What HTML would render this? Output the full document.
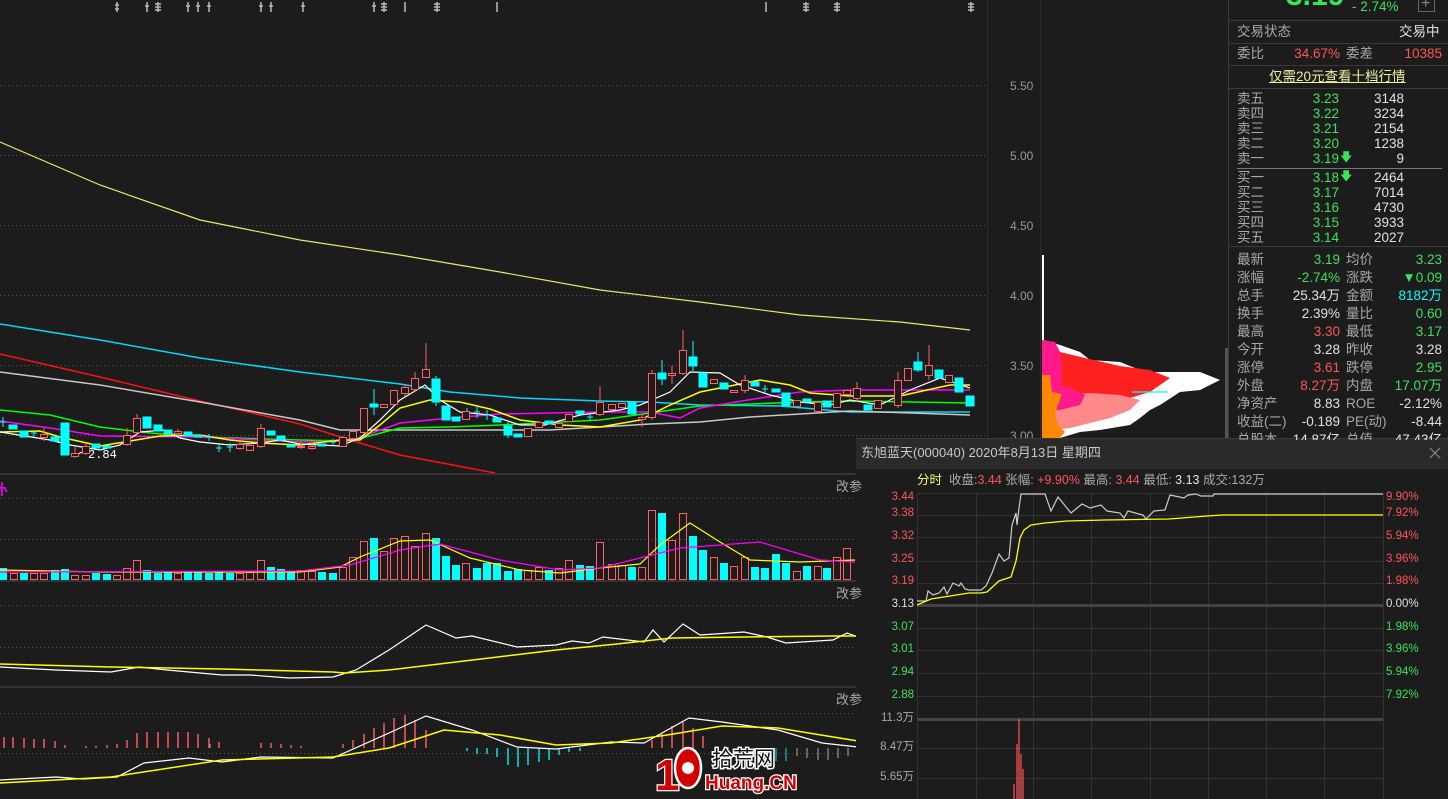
<!DOCTYPE html>
<html><head><meta charset="utf-8">
<style>
*{margin:0;padding:0;box-sizing:border-box}
body{width:1448px;height:799px;overflow:hidden;background:#1c1c1c;position:relative;font-family:"Liberation Sans","Noto Sans CJK SC",sans-serif}
.t{position:absolute;white-space:nowrap;line-height:1}
.g{color:#a8a8a8}.gr{color:#39e35a}.rd{color:#ff5555}.w{color:#e0e0e0}.cy{color:#00ffff}
#rp .t{font-size:13.5px}
.r{text-align:right}
</style></head><body>
<svg width="1448" height="799" style="position:absolute;left:0;top:0">
<g stroke="#555" stroke-width="1" stroke-dasharray="1 3">
<line x1="0" y1="85.5" x2="987" y2="85.5"/><line x1="0" y1="155.5" x2="987" y2="155.5"/><line x1="0" y1="225.5" x2="987" y2="225.5"/><line x1="0" y1="295.5" x2="987" y2="295.5"/><line x1="0" y1="365.5" x2="987" y2="365.5"/><line x1="0" y1="435.5" x2="987" y2="435.5"/>
<line x1="0" y1="498.5" x2="856" y2="498.5"/><line x1="0" y1="539.5" x2="856" y2="539.5"/>
<line x1="0" y1="605.5" x2="856" y2="605.5"/><line x1="0" y1="647.5" x2="856" y2="647.5"/>
<line x1="0" y1="713.5" x2="856" y2="713.5"/><line x1="0" y1="753.5" x2="856" y2="753.5"/>
</g>
<g stroke="#333" stroke-width="2"><line x1="0" y1="474" x2="987" y2="474"/><line x1="0" y1="581" x2="856" y2="581"/><line x1="0" y1="687" x2="856" y2="687"/></g>
<line x1="987.5" y1="0" x2="987.5" y2="799" stroke="#2c2c2c"/>
<line x1="1040.5" y1="0" x2="1040.5" y2="440" stroke="#2c2c2c"/>
<line x1="1228.5" y1="0" x2="1228.5" y2="799" stroke="#3a3a3a"/>
<rect x="1225" y="348" width="3" height="92" fill="#555"/>
<g stroke="#bbb" stroke-width="1.5">
<path d="M117 2v10M147 2v10M158 2v10M188 2v10M198 2v10M209 2v10M261 2v10M271 2v10M303 2v10M374 2v10M384 2v10M405 2v10M437 2v10M497 2v10M766 2v10M806 2v10M837 2v10M971 2v10"/>
<path d="M115 5h4M115 9h4M145 6h4M155 4h6M155 7h6M155 10h6M186 6h4M196 6h4M207 6h4M259 6h4M269 6h4M301 6h4M372 6h4M381 4h6M381 7h6M381 10h6M434 4h6M434 7h6M434 10h6M803 4h6M803 7h6M803 10h6M834 4h6M834 7h6M834 10h6M968 4h6M968 7h6M968 10h6"/>
</g>
<g fill="none" stroke-width="1.2">
<polyline stroke="#e8e86a" points="0,142 100,185 200,220 300,240 400,255 500,272 600,290 700,302 800,315 900,322 970,330"/>
<polyline stroke="#00d8ff" stroke-width="1.5" points="0,324 100,340 200,358 300,372 350,378 400,384 450,392 520,398 600,401 650,402 700,405 780,406 850,412 970,412"/>
<polyline stroke="#ff1010" stroke-width="1.5" points="0,354 100,377 200,401 300,424 350,440 400,455 495,473"/>
<polyline stroke="#c8c8c8" stroke-width="1.5" points="0,372 100,385 200,402 300,420 340,430 450,430 550,430 650,424 700,422 750,417 800,414 850,411 970,415"/>
<polyline stroke="#00ff00" stroke-width="1.5" points="0,410 50,415 100,427 150,433 200,437 300,440 350,441 400,428 450,427 500,425 600,420 650,413 700,406 800,402 850,401 970,403"/>
<polyline stroke="#ff00ff" stroke-width="1.5" points="0,421 50,428 100,436 200,437 300,442 350,441 400,423 450,418 500,414 600,412 650,412 680,418 700,408 760,398 800,392 850,390 970,390"/>
<polyline stroke="#ffff00" stroke-width="1.5" points="0,432 40,431 60,437 100,446 130,441 160,436 200,435 230,440 260,443 300,445 340,440 360,440 380,425 400,408 430,400 460,402 490,409 520,420 560,425 600,427 640,420 670,405 700,392 760,380 790,385 810,393 850,396 900,396 950,385 970,385"/>
<polyline stroke="#fff" points="0,432 50,440 70,445 100,450 120,445 140,432 165,430 180,438 200,442 230,445 260,443 280,440 300,444 340,446 360,438 380,420 400,400 425,385 440,400 460,412 490,415 520,425 545,425 580,415 620,410 640,405 670,392 690,372 720,373 740,385 770,395 800,402 830,405 850,400 880,405 910,390 940,378 970,388"/>
</g>
<text x="88" y="458" fill="#fff" font-size="12" font-family="Liberation Mono">2.84</text>
<path d="M76 455l8-4" stroke="#fff"/>
<g stroke-width="1">
<g stroke="#00ffff" fill="#00ffff">
<path d="M3 417v10M0 422h6M34 431v6M31 433h6M209 434v7M206 437h6M219 444v8M216 448h6M230 443v9M227 447h6M333 439v7M330 442h6M467 408v10M464 413h6M477 406v12M474 412h6M487 410v10M484 415h6M765 385v8M762 389h6M590 413v8M587 417h6"/>
<rect x="9" y="425" width="8" height="4"/><rect x="20" y="431" width="8" height="6"/><rect x="51" y="437" width="8" height="4"/><rect x="61" y="423" width="8" height="32"/><rect x="92" y="444" width="8" height="4"/><rect x="103" y="446" width="8" height="2"/><rect x="143" y="417" width="8" height="11"/><rect x="154" y="425" width="8" height="6"/><rect x="164" y="430" width="8" height="4"/><rect x="184" y="432" width="8" height="4"/><rect x="194" y="435" width="8" height="2"/><rect x="267" y="431" width="8" height="4"/><rect x="277" y="436" width="8" height="4"/><rect x="287" y="445" width="8" height="2"/><rect x="318" y="444" width="8" height="2"/>
<rect x="370" y="404" width="8" height="3"/><rect x="432" y="379" width="8" height="23"/><rect x="442" y="406" width="8" height="14"/><rect x="452" y="417" width="8" height="4"/><rect x="493" y="418" width="8" height="4"/><rect x="504" y="426" width="8" height="9"/><rect x="514" y="434" width="8" height="3"/><rect x="545" y="421" width="8" height="3"/><rect x="576" y="411" width="8" height="3"/><rect x="628" y="402" width="8" height="12"/><rect x="658" y="373" width="8" height="6"/><rect x="689" y="357" width="8" height="9"/><rect x="699" y="373" width="8" height="14"/><rect x="720" y="383" width="8" height="6"/><rect x="751" y="382" width="8" height="4"/><rect x="772" y="389" width="8" height="3"/><rect x="782" y="393" width="8" height="13"/><rect x="803" y="399" width="8" height="3"/><rect x="823" y="401" width="8" height="6"/><rect x="864" y="405" width="8" height="5"/><rect x="914" y="362" width="8" height="8"/><rect x="935" y="370" width="8" height="8"/><rect x="955" y="378" width="8" height="14"/><rect x="966" y="396" width="8" height="10"/>
<path d="M374 389v26M436 376v30M508 422v16M693 341v30M662 360v25M918 352v20"/>
</g>
<g stroke="#ff5f5f" fill="none">
<path d="M44 428v13M75 447v11M86 443v12M127 428v18M137 414v20M178 429v7M240 441v9M250 443v8M261 424v24M301 441v8M312 443v7M343 436v11M426 343v34M405 384v12M415 372v20M600 386v30M683 330v45M672 366v18M652 370v50M642 414v13M929 345v35M898 372v36M745 375v18M857 382v20"/>
<rect x="40.5" y="434.5" width="7" height="3" fill="#1c1c1c"/><rect x="71.5" y="453.5" width="7" height="3" fill="#1c1c1c"/><rect x="82.5" y="446.5" width="7" height="7" fill="#1c1c1c"/><rect x="123.5" y="435.5" width="7" height="9" fill="#1c1c1c"/><rect x="133.5" y="418.5" width="7" height="14" fill="#1c1c1c"/><rect x="174.5" y="431.5" width="7" height="2" fill="#1c1c1c"/><rect x="236.5" y="444.5" width="7" height="4" fill="#1c1c1c"/><rect x="246.5" y="445.5" width="7" height="5" fill="#1c1c1c"/><rect x="257.5" y="428.5" width="7" height="18" fill="#1c1c1c"/><rect x="297.5" y="446.5" width="7" height="1" fill="#1c1c1c"/><rect x="308.5" y="446.5" width="7" height="2" fill="#1c1c1c"/><rect x="339.5" y="437.5" width="7" height="9" fill="#1c1c1c"/>
<rect x="349.5" y="431.5" width="7" height="7" fill="#1c1c1c"/><rect x="360.5" y="408.5" width="7" height="24" fill="#1c1c1c"/><rect x="380.5" y="404.5" width="7" height="3" fill="#1c1c1c"/><rect x="390.5" y="390.5" width="7" height="14" fill="#1c1c1c"/><rect x="401.5" y="387.5" width="7" height="6" fill="#1c1c1c"/><rect x="411.5" y="378.5" width="7" height="11" fill="#1c1c1c"/><rect x="422.5" y="369.5" width="7" height="8" fill="#1c1c1c"/><rect x="462.5" y="411.5" width="7" height="8" fill="#1c1c1c"/><rect x="524.5" y="428.5" width="7" height="8" fill="#1c1c1c"/><rect x="535.5" y="422.5" width="7" height="5" fill="#1c1c1c"/><rect x="555.5" y="423.5" width="7" height="4" fill="#1c1c1c"/><rect x="565.5" y="414.5" width="7" height="7" fill="#1c1c1c"/><rect x="596.5" y="402.5" width="7" height="12" fill="#1c1c1c"/><rect x="608.5" y="404.5" width="7" height="5" fill="#1c1c1c"/><rect x="618.5" y="403.5" width="7" height="4" fill="#1c1c1c"/><rect x="638.5" y="417.5" width="7" height="2" fill="#1c1c1c"/><rect x="648.5" y="373.5" width="7" height="44" fill="#1c1c1c"/><rect x="668.5" y="373.5" width="7" height="2" fill="#1c1c1c"/><rect x="679.5" y="350.5" width="7" height="23" fill="#1c1c1c"/><rect x="710.5" y="379.5" width="7" height="4" fill="#1c1c1c"/><rect x="730.5" y="390.5" width="7" height="2" fill="#1c1c1c"/><rect x="741.5" y="380.5" width="7" height="10" fill="#1c1c1c"/><rect x="793.5" y="400.5" width="7" height="6" fill="#1c1c1c"/><rect x="814.5" y="402.5" width="7" height="9" fill="#1c1c1c"/><rect x="833.5" y="393.5" width="7" height="14" fill="#1c1c1c"/><rect x="843.5" y="390.5" width="7" height="4" fill="#1c1c1c"/><rect x="853.5" y="388.5" width="7" height="10" fill="#1c1c1c"/><rect x="874.5" y="400.5" width="7" height="8" fill="#1c1c1c"/><rect x="894.5" y="380.5" width="7" height="25" fill="#1c1c1c"/><rect x="904.5" y="368.5" width="7" height="12" fill="#1c1c1c"/><rect x="925.5" y="365.5" width="7" height="10" fill="#1c1c1c"/><rect x="945.5" y="375.5" width="7" height="7" fill="#1c1c1c"/>
</g>
</g>
<g fill="#999" font-size="12" font-family="Liberation Sans">
<text x="1010" y="90">5.50</text><text x="1010" y="160">5.00</text><text x="1010" y="230">4.50</text><text x="1010" y="300">4.00</text><text x="1010" y="370">3.50</text><text x="1010" y="440">3.00</text>
</g>
<g>
<polygon fill="#fff" points="1042,255 1044,255 1044,340 1060,345 1080,352 1090,360 1120,362 1145,372 1200,372 1220,380 1200,390 1180,392 1160,405 1150,410 1140,418 1130,425 1100,430 1080,432 1060,438 1042,438"/>
<polygon fill="#ff2020" points="1060,352 1085,358 1120,366 1150,370 1170,378 1150,392 1130,398 1100,400 1080,398 1070,392 1060,385"/>
<polygon fill="#ff8888" points="1055,395 1090,393 1120,395 1140,400 1130,410 1110,418 1090,423 1070,428 1055,430"/>
<polygon fill="#ff1a8c" points="1042,340 1055,342 1060,352 1062,375 1060,385 1075,390 1085,395 1080,405 1060,410 1042,410"/>
<polygon fill="#ff8800" points="1042,375 1050,375 1052,392 1062,394 1058,405 1055,415 1058,425 1065,432 1060,438 1042,438"/>
<line x1="1132" y1="392" x2="1168" y2="392" stroke="#0ff" stroke-width="1.2"/>
</g>
<g fill="#00ffff">
<rect x="0" y="568" width="7" height="12"/><rect x="20" y="573" width="8" height="7"/><rect x="51" y="570" width="8" height="10"/><rect x="61" y="569" width="8" height="11"/><rect x="92" y="573" width="8" height="7"/><rect x="103" y="574" width="8" height="6"/><rect x="143" y="570" width="8" height="10"/><rect x="154" y="573" width="8" height="7"/><rect x="164" y="572" width="8" height="8"/><rect x="184" y="572" width="8" height="8"/><rect x="194" y="572" width="8" height="8"/><rect x="205" y="573" width="8" height="7"/><rect x="215" y="572" width="8" height="8"/><rect x="226" y="573" width="8" height="7"/><rect x="267" y="567" width="8" height="13"/><rect x="277" y="569" width="8" height="11"/><rect x="287" y="572" width="8" height="8"/><rect x="318" y="572" width="8" height="8"/><rect x="329" y="573" width="8" height="7"/>
<rect x="370" y="538" width="8" height="42"/><rect x="432" y="538" width="8" height="42"/><rect x="442" y="556" width="8" height="24"/><rect x="452" y="565" width="8" height="15"/><rect x="473" y="568" width="8" height="12"/><rect x="483" y="563" width="8" height="17"/><rect x="493" y="563" width="8" height="17"/><rect x="504" y="571" width="8" height="9"/><rect x="514" y="569" width="8" height="11"/><rect x="545" y="570" width="8" height="10"/><rect x="576" y="565" width="8" height="15"/><rect x="586" y="566" width="8" height="14"/><rect x="628" y="567" width="8" height="13"/><rect x="658" y="513" width="8" height="67"/><rect x="689" y="536" width="8" height="44"/><rect x="699" y="550" width="8" height="30"/><rect x="720" y="563" width="8" height="17"/><rect x="751" y="567" width="8" height="13"/><rect x="761" y="568" width="8" height="12"/><rect x="772" y="554" width="8" height="26"/><rect x="782" y="563" width="8" height="17"/><rect x="803" y="566" width="8" height="14"/><rect x="823" y="568" width="8" height="12"/>
</g>
<g fill="none" stroke="#ff5f5f">
<rect x="10.5" y="573.5" width="7" height="6"/><rect x="30.5" y="573.5" width="7" height="6"/><rect x="40.5" y="573.5" width="7" height="6"/><rect x="71.5" y="575.5" width="7" height="4"/><rect x="82.5" y="575.5" width="7" height="4"/><rect x="113.5" y="575.5" width="7" height="4"/><rect x="123.5" y="568.5" width="7" height="11"/><rect x="133.5" y="560.5" width="7" height="19"/><rect x="174.5" y="573.5" width="7" height="6"/><rect x="236.5" y="573.5" width="7" height="6"/><rect x="246.5" y="572.5" width="7" height="7"/><rect x="257.5" y="560.5" width="7" height="19"/><rect x="297.5" y="570.5" width="7" height="9"/><rect x="308.5" y="571.5" width="7" height="8"/><rect x="339.5" y="567.5" width="7" height="12"/>
<rect x="349.5" y="557.5" width="7" height="22"/><rect x="360.5" y="541.5" width="7" height="38"/><rect x="380.5" y="551.5" width="7" height="28"/><rect x="390.5" y="538.5" width="7" height="41"/><rect x="401.5" y="536.5" width="7" height="43"/><rect x="411.5" y="546.5" width="7" height="33"/><rect x="422.5" y="533.5" width="7" height="46"/><rect x="462.5" y="563.5" width="7" height="16"/><rect x="524.5" y="570.5" width="7" height="9"/><rect x="535.5" y="567.5" width="7" height="12"/><rect x="555.5" y="568.5" width="7" height="11"/><rect x="565.5" y="560.5" width="7" height="19"/><rect x="596.5" y="542.5" width="7" height="37"/><rect x="608.5" y="564.5" width="7" height="15"/><rect x="618.5" y="565.5" width="7" height="14"/><rect x="638.5" y="567.5" width="7" height="12"/><rect x="648.5" y="510.5" width="7" height="69"/><rect x="668.5" y="540.5" width="7" height="39"/><rect x="679.5" y="513.5" width="7" height="66"/><rect x="710.5" y="557.5" width="7" height="22"/><rect x="730.5" y="566.5" width="7" height="13"/><rect x="741.5" y="557.5" width="7" height="22"/><rect x="793.5" y="571.5" width="7" height="8"/><rect x="814.5" y="566.5" width="7" height="13"/><rect x="833.5" y="557.5" width="7" height="22"/><rect x="843.5" y="548.5" width="7" height="31"/>
</g>
<polyline fill="none" stroke="#ffff00" stroke-width="1.2" points="0,570 100,572 300,572 340,567 360,557 400,541 430,540 470,558 520,570 560,573 600,568 640,564 660,545 690,523 720,542 750,560 800,562 855,560"/>
<polyline fill="none" stroke="#ff00ff" stroke-width="1.2" points="0,572 300,571 350,565 400,550 440,544 500,560 560,570 600,568 680,548 720,545 760,542 820,560 855,562"/>
<path d="M2 482v14M0 488h6M5 489l2 3" stroke="#ff00ff" stroke-width="1.5"/>
<polyline fill="none" stroke="#fff" stroke-width="1.2" points="0,667 56,670 111,672 139,667 167,670 222,675 250,675 289,678 333,677 356,670 389,650 426,625 456,638 472,636 517,647 556,645 572,641 589,643 603,637 644,642 653,630 664,642 683,624 700,635 744,632 767,637 786,643 833,640 847,633 858,637"/>
<polyline fill="none" stroke="#ffff00" stroke-width="1.5" points="0,664 111,667 222,669 333,672 345,673 389,670 456,662 556,650 617,644 672,638 744,637 833,636 858,636"/>
<g stroke="#ff5a5a" stroke-width="1.5">
<path d="M4 748v-11M13 748v-11M24 748v-10M34 748v-9M44 748v-9M55 748v-7M65 748v-3M86 748v-2M96 748v-2M107 748v-3M117 748v-4M127 748v-8M137 748v-15M147 748v-16M158 748v-16M168 748v-16M178 748v-16M188 748v-16M198 748v-14M209 748v-10M219 748v-6M261 748v-5M271 748v-5M281 748v-4M291 748v-3M301 748v-2M343 748v-4M353 748v-8M364 748v-14M374 748v-20M384 748v-25M394 748v-30M405 748v-33M415 748v-28M426 748v-18M652 748v-8M662 748v-14M672 748v-22M683 748v-26M693 748v-20M703 748v-12"/>
</g>
<g stroke="#00e0f0" stroke-width="1.5">
<path d="M467 748v3M477 748v6M487 748v6M497 748v9M508 748v17M518 748v19M528 748v17M539 748v14M549 748v12M559 748v7M569 748v4M580 748v3"/>
</g>
<g stroke="#aaa" stroke-width="1"><path d="M210 748v-4M797 748v8M807 748v10M818 748v12M828 748v12M838 748v10M848 748v8"/></g>
<g stroke="#00e0f0"><path d="M776 748v13M786 748v13"/></g>
<polyline fill="none" stroke="#fff" stroke-width="1.2" points="0,780 56,777 83,779 117,777 144,763 189,758 222,762 261,757 333,758 389,733 426,716 472,730 517,747 556,749 611,742 644,743 689,718 722,722 778,730 822,743 858,747"/>
<polyline fill="none" stroke="#ffff00" stroke-width="1.5" points="0,783 111,777 222,760 333,757 389,748 444,730 500,735 556,745 611,743 667,735 722,726 778,728 858,741"/>
<rect x="856" y="438" width="592" height="361" fill="#1c1c1c"/>
<rect x="856" y="438" width="592" height="31" fill="#2a2a2a"/>
<line x1="856" y1="438.5" x2="1448" y2="438.5" stroke="#3a3a3a"/>
<path d="M1430 448l10 10M1440 448l-10 10" stroke="#888" stroke-width="1.2"/>
<g stroke="#333" stroke-width="1">
<path d="M917 493.5h466M917 515.5h466M917 537.5h466M917 561.5h466M917 583.5h466M917 628.5h466M917 650.5h466M917 673.5h466M917 696.5h466M917 748.5h466M917 778.5h466"/>
<path d="M917.5 493v306M976.5 493v306M1033.5 493v306M1091.5 493v306M1150.5 493v306M1208.5 493v306M1266.5 493v306M1324.5 493v306M1383.5 493v306"/>
</g>
<path d="M917 605.5h466M917 719.5h466" stroke="#444" stroke-width="3"/>
<polyline fill="none" stroke="#ccc" stroke-width="1.2" points="917,601 926,601 928,591 933,595 939,593 944,587 947,594 953,583 959,586 961,583 965,589 969,590 981,590 986,586 992,573 999,554 1004,561 1009,558 1012,525 1016,513 1017,525 1019,508 1021,494 1045,494 1051,511 1058,497 1071,513 1082,504 1090,508 1101,505 1107,511 1120,513 1124,518 1128,511 1143,515 1146,519 1154,511 1165,510 1170,495 1184,498 1188,495 1196,494 1201,496 1213,496 1214,494 1383,494"/>
<polyline fill="none" stroke="#ffff00" stroke-width="1.3" points="917,605 931,599 969,593 981,593 987,592 999,581 1011,577 1016,561 1020,538 1024,530 1031,525 1045,523 1067,521 1105,520 1169,519 1207,516 1222,515 1383,515"/>
<g stroke="#ff5555" stroke-width="1.2"><path d="M1014 799v-15M1017 799v-55M1019 799v-80M1021 799v-45M1023 799v-30"/></g>
<g font-family="Liberation Sans" font-weight="bold">
<text x="655" y="790" font-size="44" fill="#d40000" stroke="#fff" stroke-width="2.5" paint-order="stroke">1</text>
<ellipse cx="688" cy="768" rx="13" ry="20" fill="#d40000" stroke="#fff" stroke-width="2.5"/>
<circle cx="688" cy="768" r="6" fill="#fff"/>
<text x="705" y="789" font-size="19" fill="#d40000" stroke="#fff" stroke-width="2.5" paint-order="stroke">Huang.CN</text>
</g>
<text x="712" y="766" font-size="21" fill="#111" stroke="#fff" stroke-width="3" paint-order="stroke" font-family="Noto Sans CJK SC">拾荒网</text>
</svg>
<div class="t g" style="left:836px;top:480px;font-size:13px">改参</div>
<div class="t g" style="left:836px;top:587px;font-size:13px">改参</div>
<div class="t g" style="left:836px;top:693px;font-size:13px">改参</div>
<div class="t" style="left:861px;top:446px;font-size:13px;color:#c8c8c8">东旭蓝天(000040) 2020年8月13日 星期四</div>
<div class="t" style="left:917px;top:474px;font-size:12.5px;color:#aaa"><span style="color:#ffff66">分时</span>&nbsp; 收盘:<span class="rd">3.44</span> 张幅: <span class="rd">+9.90%</span> 最高: <span class="rd">3.44</span> 最低: <span class="w">3.13</span> 成交:132万</div>
<div style="position:absolute;left:860px;top:0;width:54px;font-size:11.5px;font-family:'Liberation Sans','Noto Sans CJK SC',sans-serif">
<div class="t rd r" style="width:54px;top:492px">3.44</div><div class="t rd r" style="width:54px;top:508px">3.38</div><div class="t rd r" style="width:54px;top:531px">3.32</div><div class="t rd r" style="width:54px;top:554px">3.25</div><div class="t rd r" style="width:54px;top:576px">3.19</div><div class="t w r" style="width:54px;top:599px">3.13</div><div class="t gr r" style="width:54px;top:622px">3.07</div><div class="t gr r" style="width:54px;top:644px">3.01</div><div class="t gr r" style="width:54px;top:667px">2.94</div><div class="t gr r" style="width:54px;top:690px">2.88</div><div class="t g r" style="width:54px;top:713px">11.3万</div><div class="t g r" style="width:54px;top:742px">8.47万</div><div class="t g r" style="width:54px;top:772px">5.65万</div>
</div>
<div style="position:absolute;left:1386px;top:0;font-size:11.5px">
<div class="t rd" style="top:492px">9.90%</div><div class="t rd" style="top:508px">7.92%</div><div class="t rd" style="top:531px">5.94%</div><div class="t rd" style="top:554px">3.96%</div><div class="t rd" style="top:576px">1.98%</div><div class="t w" style="top:599px">0.00%</div><div class="t gr" style="top:622px">1.98%</div><div class="t gr" style="top:644px">3.96%</div><div class="t gr" style="top:667px">5.94%</div><div class="t gr" style="top:690px">7.92%</div>
</div>
<div id="rp" style="position:absolute;left:1229px;top:0;width:219px;height:440px;overflow:hidden">
<div class="t gr" style="left:57px;top:-19px;font-size:30px;font-weight:bold">3.19</div>
<div class="t gr" style="left:123px;top:0px;font-size:13.5px">- 2.74%</div>
<div style="position:absolute;left:189px;top:-4px;width:17px;height:16px;border:1px solid #666"></div>
<div class="t" style="left:192px;top:-4px;color:#888;font-size:16px">+</div>
<div style="position:absolute;left:0;top:20px;width:219px;border-top:1px solid #3a3a3a"></div>
<div class="t g" style="left:8px;top:25px">交易状态</div><div class="t w" style="left:170px;top:25px">交易中</div>
<div style="position:absolute;left:0;top:43px;width:219px;border-top:1px solid #3a3a3a"></div>
<div class="t g" style="left:8px;top:47px">委比</div><div class="t rd r" style="left:50px;width:61px;top:47px">34.67%</div><div class="t g" style="left:117px;top:47px">委差</div><div class="t rd r" style="left:150px;width:63px;top:47px">10385</div>
<div style="position:absolute;left:0;top:65px;width:219px;border-top:1px solid #3a3a3a"></div>
<div class="t" style="left:40px;top:70px;color:#f0f0a0;text-decoration:underline">仅需20元查看十档行情</div>
<div style="position:absolute;left:0;top:88px;width:219px;border-top:1px solid #3a3a3a"></div>
<div class="t g" style="left:8px;top:91px;line-height:15px">卖五<br>卖四<br>卖三<br>卖二<br>卖一</div>
<div class="t gr r" style="left:60px;width:50px;top:91px;line-height:15px">3.23<br>3.22<br>3.21<br>3.20<br>3.19</div>
<div class="t gr" style="left:111px;top:151px;font-size:12px">🡇</div>
<div class="t w r" style="left:120px;width:55px;top:91px;line-height:15px">3148<br>3234<br>2154<br>1238<br>9</div>
<div style="position:absolute;left:8px;top:168px;width:205px;border-top:1px solid #777"></div>
<div class="t g" style="left:8px;top:170px;line-height:15px">买一<br>买二<br>买三<br>买四<br>买五</div>
<div class="t gr r" style="left:60px;width:50px;top:170px;line-height:15px">3.18<br>3.17<br>3.16<br>3.15<br>3.14</div>
<div class="t gr" style="left:111px;top:170px;font-size:12px">🡇</div>
<div class="t w r" style="left:120px;width:55px;top:170px;line-height:15px">2464<br>7014<br>4730<br>3933<br>2027</div>
<div style="position:absolute;left:0;top:246px;width:219px;border-top:1px solid #3a3a3a"></div>
<div class="t g" style="left:8px;top:251px;line-height:18px">最新<br>涨幅<br>总手<br>换手<br>最高<br>今开<br>涨停<br>外盘<br>净资产<br>收益(二)<br>总股本</div>
<div class="t r" style="left:40px;width:71px;top:251px;line-height:18px"><span class="gr">3.19</span><br><span class="gr">-2.74%</span><br><span class="w">25.34万</span><br><span class="w">2.39%</span><br><span class="rd">3.30</span><br><span class="w">3.28</span><br><span class="rd">3.61</span><br><span class="rd">8.27万</span><br><span class="w">8.83</span><br><span class="w">-0.189</span><br><span class="w">14.87亿</span></div>
<div class="t g" style="left:117px;top:251px;line-height:18px">均价<br>涨跌<br>金额<br>量比<br>最低<br>昨收<br>跌停<br>内盘<br>ROE<br>PE(动)<br>总值</div>
<div class="t r" style="left:140px;width:73px;top:251px;line-height:18px"><span class="gr">3.23</span><br><span class="gr">▼0.09</span><br><span class="cy">8182万</span><br><span class="gr">0.60</span><br><span class="gr">3.17</span><br><span class="w">3.28</span><br><span class="gr">2.95</span><br><span class="gr">17.07万</span><br><span class="w">-2.12%</span><br><span class="w">-8.44</span><br><span class="w">47.43亿</span></div>
</div>
</body></html>
